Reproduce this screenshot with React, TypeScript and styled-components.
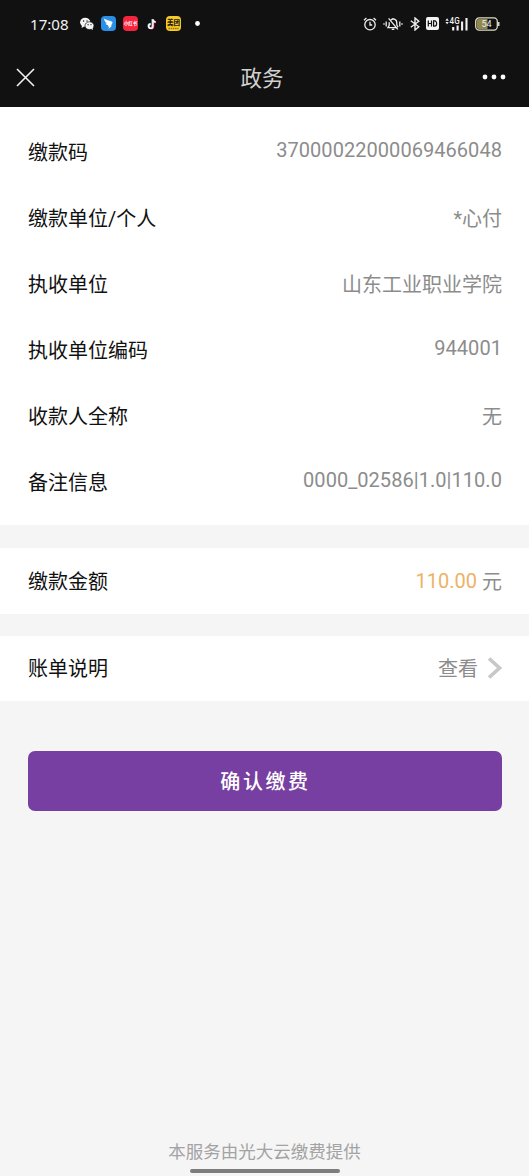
import React from 'react';
import styled, { createGlobalStyle } from 'styled-components';

const GlobalStyle = createGlobalStyle`
  * { box-sizing: border-box; }
  html, body, #root { height: 100%; }
  body {
    margin: 0;
    background: #fff;
    font-family: Roboto, "Noto Sans CJK SC", sans-serif;
  }
`;

const Screen = styled.div`
  width: 529px;
  height: 1176px;
  display: flex;
  flex-direction: column;
  background: #f5f5f5;
  overflow: hidden;
`;

const Header = styled.header`
  height: 107px;
  flex: none;
  background: #111;
`;

const StatusBar = styled.div`
  height: 47px;
  display: flex;
  align-items: center;
  justify-content: space-between;
  padding: 0 29px 0 30px;
  color: #f2f2f2;
`;

const StatusGroup = styled.div`
  display: flex;
  align-items: center;
`;

const Clock = styled.span`
  width: 50px;
  font: 15.1px/20px "Noto Sans", sans-serif;
`;

const AppIcon = styled.svg<{ $gap?: number }>`
  display: block;
  flex: none;
  margin-left: ${(p) => p.$gap ?? 0}px;
`;

const NavBar = styled.div`
  height: 60px;
  display: grid;
  grid-template-columns: 60px 1fr 60px;
  align-items: center;
  padding: 0 23px 0 16px;
`;

const Title = styled.h1`
  margin: 0;
  padding: 3px 0 0 2px;
  text-align: center;
  font-size: 21.5px;
  line-height: 30px;
  font-weight: 400;
  color: #d0d0d0;
`;

const MoreIcon = styled.svg`
  display: block;
  justify-self: end;
`;

const Card = styled.section<{ $top?: number; $bottom?: number; $gap?: number }>`
  background: #fff;
  padding: ${(p) => p.$top ?? 0}px 27px ${(p) => p.$bottom ?? 0}px 28px;
  margin-bottom: ${(p) => p.$gap ?? 0}px;
`;

const Row = styled.div<{ $height?: number }>`
  height: ${(p) => p.$height ?? 66}px;
  display: flex;
  align-items: center;
  justify-content: space-between;
  font-size: 20px;
  line-height: 30px;
`;

const Label = styled.span`
  color: #111;
  padding-top: 2px;
`;

const Value = styled.span<{ $numeric?: boolean }>`
  display: flex;
  align-items: center;
  color: #8c8c8c;
  letter-spacing: ${(p) => (p.$numeric ? '0.05px' : '0')};
  padding: ${(p) => (p.$numeric ? '0 0 5px' : '2px 0 0')};
`;

const Amount = styled.span`
  color: #edb266;
  margin-right: 5px;
  padding-bottom: 2px;
`;

const Chevron = styled.svg`
  display: block;
  margin: 0 0 3px 9px;
`;

const ConfirmButton = styled.button`
  height: 60px;
  flex: none;
  margin: 50px 27px 0 28px;
  padding: 1px 0 0 1px;
  border: 0;
  border-radius: 7px;
  background: #773fa1;
  color: #fff;
  font: 500 20px/30px Roboto, "Noto Sans CJK SC", sans-serif;
  letter-spacing: 2.6px;
`;

const Footer = styled.footer`
  margin-top: auto;
  display: flex;
  flex-direction: column;
  align-items: center;
  font-size: 17.5px;
  line-height: 26px;
  color: #a3a3a3;
`;

const HomeIndicator = styled.div`
  width: 150px;
  height: 4px;
  margin: 4px 0 3px;
  border-radius: 2px;
  background: #7d7d7d;
`;

const details = [
  { label: '缴款码', value: '37000022000069466048', numeric: true },
  { label: '缴款单位/个人', value: '*心付' },
  { label: '执收单位', value: '山东工业职业学院' },
  { label: '执收单位编码', value: '944001', numeric: true },
  { label: '收款人全称', value: '无' },
  { label: '备注信息', value: '0000_02586|1.0|110.0', numeric: true },
];

function NotificationIcons() {
  return (
    <>
      <AppIcon width="14" height="14" viewBox="0 0 14 14">
        <ellipse cx="5.2" cy="5.3" rx="5.1" ry="4.5" fill="#f4f4f4" />
        <path d="M2 8.5 1.6 11l2.6-1.5z" fill="#f4f4f4" />
        <ellipse cx="9.5" cy="8.7" rx="4.5" ry="3.9" fill="#f4f4f4" stroke="#111" strokeWidth=".7" />
        <path d="m11 11.5 1.8 1.8-.2-2.8z" fill="#f4f4f4" />
        <g fill="#111">
          <circle cx="3.6" cy="4" r=".7" />
          <circle cx="7" cy="4" r=".7" />
          <circle cx="8.1" cy="7.7" r=".6" />
          <circle cx="11" cy="7.7" r=".6" />
        </g>
      </AppIcon>
      <AppIcon $gap={7} width="15" height="15" viewBox="0 0 15 15">
        <rect width="15" height="15" rx="4" fill="#2b8fe6" />
        <path d="M3 2.6c2.4 1.5 5 1.9 7.6 2.9 1.1.4 1 1.2.6 2L9.9 9.7h1.2L7.4 13l.8-2.500H6.8l.5-1.200C5.5 9 4.8 8.2 4.5 7.2l1.6.2C4.3 6.300 3.200 4.700 3 2.600z" fill="#fff" />
      </AppIcon>
      <AppIcon $gap={6.5} width="15" height="15" viewBox="0 0 15 15">
        <rect width="15" height="15" rx="4" fill="#f5243f" />
        <text x="7.5" y="9.3" textAnchor="middle" fontSize="4.4" fontWeight="700" fill="#fff">小红书</text>
      </AppIcon>
      <AppIcon $gap={9} width="11" height="12" viewBox="0 0 11 12">
        <g fill="none" strokeWidth="1.9">
          <path d="M5.4 1v7A2 2 0 1 1 3.400 6M5.400 1.500c.3 1.500 1.400 2.300 2.900 2.400" stroke="#35d5d8" />
          <path d="M6.300 1.400v7A2.100 2.100 0 1 1 4.200 6.300M6.300 2c.3 1.500 1.300 2.300 2.800 2.400" stroke="#e22c55" />
          <path d="M5.900 1.200v7A2.100 2.100 0 1 1 3.800 6.100M5.900 1.700c.3 1.500 1.300 2.300 2.800 2.400" stroke="#fff" strokeWidth="1.5" />
        </g>
      </AppIcon>
      <AppIcon $gap={8} width="15" height="15" viewBox="0 0 15 15">
        <rect width="15" height="15" rx="4" fill="#f8cb25" />
        <text x="7.5" y="9.2" textAnchor="middle" fontSize="6.5" fontWeight="900" fill="#1e1a10">美团</text>
        <path d="M2.500 12.500h10" stroke="#91701b" strokeWidth="1.6" strokeDasharray="1.5 .7" />
      </AppIcon>
      <AppIcon $gap={14} width="5" height="5" viewBox="0 0 5 5">
        <circle cx="2.5" cy="2.5" r="2.4" fill="#fff" />
      </AppIcon>
    </>
  );
}

function SystemIcons() {
  return (
    <>
      <AppIcon width="14" height="14" viewBox="0 0 14 14" fill="none" stroke="#eee" strokeWidth="1.3">
        <circle cx="7" cy="7.7" r="5.2" />
        <path d="M7 4.800v3.200h2.200M1 3.200 3.400 1M13 3.200 10.600 1" />
      </AppIcon>
      <AppIcon $gap={6} width="20" height="14" viewBox="0 0 20 14" fill="none" stroke="#eee" strokeWidth="1.3">
        <path d="M6.200 5.200v3.100L4.900 10.600h9.600M7.600 3.300C9.400.9 13.800 1.900 13.800 6v2l1.300 2M10 1v1M8.700 12.400h2.600M5.600 1.300l9.200 11M3.200 4.600v4.800M16.800 4.600v4.800M1 6.200v1.600M19 6.200v1.600" />
      </AppIcon>
      <AppIcon $gap={6} width="12" height="14" viewBox="0 0 12 14" fill="none" stroke="#eee" strokeWidth="1.4">
        <path d="m1.800 3.800 8 6L6 13V1l3.800 3.200-8 6" />
      </AppIcon>
      <AppIcon $gap={5.5} width="13" height="13" viewBox="0 0 13 13">
        <rect width="13" height="13" rx="2" fill="#f3f3f3" />
        <path d="M2.300 3.400v6.200M5.500 3.400v6.200M2.300 6.500h3.200M7.600 3.900v5.200h1.100c2.600 0 2.600-5.200 0-5.200z" fill="none" stroke="#111" strokeWidth="1.2" />
      </AppIcon>
      <AppIcon $gap={6} width="24" height="14" viewBox="0 0 24 14">
        <path d="M.4 3.800 2.100 1.300l1.700 2.500zM.4 4.900h3.400L2.100 7.300z" fill="#eee" />
        <text x="4.6" y="7.2" fontSize="9" fontWeight="500" textLength="10" lengthAdjust="spacingAndGlyphs" fill="#eee">4G</text>
        <path d="M8.200 13.500v-3.500M12.600 13.500V8.500M17.100 13.500V4.500M21.500 13.500V1" stroke="#f2f2f2" strokeWidth="2.1" />
      </AppIcon>
      <AppIcon $gap={6} width="25" height="14" viewBox="0 0 25 14">
        <rect x=".7" y=".9" width="21.6" height="12.2" rx="3.5" fill="#111" stroke="#dedbc8" strokeWidth="1.3" />
        <path d="M4 2h8.500v10H4a2.200 2.200 0 0 1-2.200-2.200V4.200A2.200 2.200 0 0 1 4 2z" fill="#92884f" />
        <path d="M23.800 5v4" stroke="#eee" strokeWidth="1.3" />
        <text x="11.5" y="10.2" textAnchor="middle" fontSize="9" fill="#eee">54</text>
      </AppIcon>
    </>
  );
}

export default function App() {
  return (
    <Screen>
      <GlobalStyle />
      <Header>
        <StatusBar>
          <StatusGroup>
            <Clock>17:08</Clock>
            <NotificationIcons />
          </StatusGroup>
          <StatusGroup>
            <SystemIcons />
          </StatusGroup>
        </StatusBar>
        <NavBar>
          <svg width="19" height="19" viewBox="0 0 19 19" fill="none" stroke="#f2f2f2" strokeWidth="1.6">
            <path d="m1 1 17 17M18 1 1 18" />
          </svg>
          <Title>政务</Title>
          <MoreIcon width="24" height="6" viewBox="0 0 24 6" fill="#fff">
            <circle cx="3" cy="3" r="2.4" />
            <circle cx="12" cy="3" r="2.4" />
            <circle cx="21" cy="3" r="2.4" />
          </MoreIcon>
        </NavBar>
      </Header>
      <Card $top={12} $bottom={10} $gap={23}>
        {details.map((item) => (
          <Row key={item.label}>
            <Label>{item.label}</Label>
            <Value $numeric={item.numeric}>{item.value}</Value>
          </Row>
        ))}
      </Card>
      <Card $gap={22}>
        <Row $height={65.5}>
          <Label>缴款金额</Label>
          <Value>
            <Amount>110.00</Amount>元
          </Value>
        </Row>
      </Card>
      <Card>
        <Row $height={65.5}>
          <Label>账单说明</Label>
          <Value>
            查看
            <Chevron width="15" height="22" viewBox="0 0 15 22" fill="none" stroke="#c8c8c8" strokeWidth="3.6">
              <path d="m2 1.500 10.500 9.500L2 20.500" />
            </Chevron>
          </Value>
        </Row>
      </Card>
      <ConfirmButton>确认缴费</ConfirmButton>
      <Footer>
        本服务由光大云缴费提供
        <HomeIndicator />
      </Footer>
    </Screen>
  );
}
